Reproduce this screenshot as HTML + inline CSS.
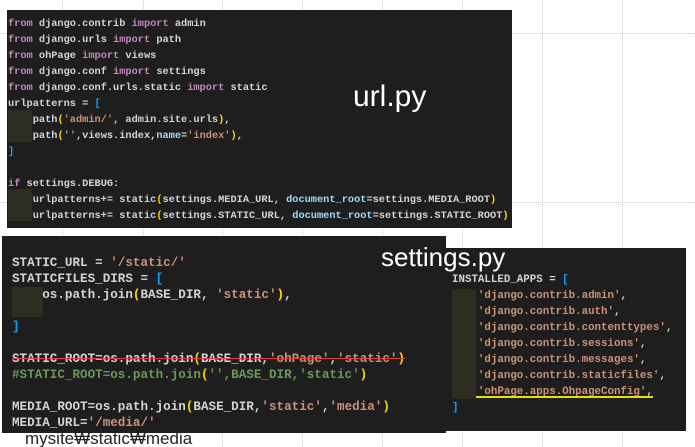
<!DOCTYPE html>
<html><head><meta charset="utf-8"><style>
html,body{margin:0;padding:0;width:695px;height:447px;overflow:hidden;background:#fff;position:relative}
.p{position:absolute;background:#1e1e1e}
.c{position:absolute;font-family:"Liberation Mono",monospace;font-size:11.5px;color:#d4d4d4;white-space:pre;line-height:16px;font-weight:bold}
.k{color:#c586c0}.s{color:#ce9178}.b{color:#9cdcfe}.y{color:#ffd700}.bl{color:#179fff}.g{color:#6a9955}
.ind{position:absolute;background:#2d2d22}
.big{position:absolute;font-family:"Liberation Sans",sans-serif;color:#fff;font-size:26px}
.grid{position:absolute;border-left:1px dotted #ccc;top:0;height:447px}
.hg{position:absolute;border-top:1px dotted #ccc;left:0;width:695px}
</style></head><body>
<div class="grid" style="left:62px"></div><div class="grid" style="left:143px"></div><div class="grid" style="left:222px"></div><div class="grid" style="left:302px"></div><div class="grid" style="left:382px"></div><div class="grid" style="left:462px"></div><div class="grid" style="left:542px"></div><div class="grid" style="left:622px"></div>
<div class="hg" style="top:33px"></div><div class="hg" style="top:202px"></div>

<div class="p" style="left:7px;top:10px;width:505px;height:218px"></div>
<div class="ind" style="left:8px;top:110px;width:24px;height:32px"></div>
<div class="ind" style="left:8px;top:189px;width:24px;height:32px"></div>
<div class="c" style="left:8px;top:16px;font-size:10.3px"><span class="k">from</span> django.contrib <span class="k">import</span> admin
<span class="k">from</span> django.urls <span class="k">import</span> path
<span class="k">from</span> ohPage <span class="k">import</span> views
<span class="k">from</span> django.conf <span class="k">import</span> settings
<span class="k">from</span> django.conf.urls.static <span class="k">import</span> static
urlpatterns = <span class="bl">[</span>
    path<span class="y">(</span><span class="s">'admin/'</span>, admin.site.urls<span class="y">)</span>,
    path<span class="y">(</span><span class="s">''</span>,views.index,<span class="b">name</span>=<span class="s">'index'</span><span class="y">)</span>,
<span class="bl">]</span>

<span class="k">if</span> settings.DEBUG:
    urlpatterns+= static<span class="y">(</span>settings.MEDIA_URL, <span class="b">document_root</span>=settings.MEDIA_ROOT<span class="y">)</span>
    urlpatterns+= static<span class="y">(</span>settings.STATIC_URL, <span class="b">document_root</span>=settings.STATIC_ROOT<span class="y">)</span></div>
<div class="big" style="left:353px;top:80px;font-size:30px">url.py</div>

<div class="p" style="left:2px;top:236px;width:444px;height:197px"></div>
<div class="p" style="left:446px;top:248px;width:240px;height:183px"></div>
<div class="ind" style="left:12px;top:287px;width:31px;height:30px"></div>
<div class="c" style="left:12px;top:255px;font-size:12.6px"><span>STATIC_URL = <span class="s">'/static/'</span></span>
STATICFILES_DIRS = <span class="bl">[</span>
    os.path.join<span class="y">(</span>BASE_DIR, <span class="s">'static'</span><span class="y">)</span>,

<span class="bl">]</span>

<span style="text-decoration:line-through;text-decoration-color:#e04040">STATIC_ROOT=os.path.join<span class="y">(</span>BASE_DIR,<span class="s">'ohPage'</span>,<span class="s">'static'</span><span class="y">)</span></span>
<span class="g">#STATIC_ROOT=os.path.join<span class="y">(</span>'',BASE_DIR,'static'<span class="y">)</span></span>

MEDIA_ROOT=os.path.join<span class="y">(</span>BASE_DIR,<span class="s">'static'</span>,<span class="s">'media'</span><span class="y">)</span>
MEDIA_URL=<span class="s">'/media/'</span></div>
<div class="big" style="left:381px;top:242px">settings.py</div>

<div class="ind" style="left:452px;top:289px;width:24px;height:110px"></div>
<div class="c" style="left:452px;top:272px;font-size:10.8px">INSTALLED_APPS = <span class="bl">[</span>
    <span class="s">'django.contrib.admin'</span>,
    <span class="s">'django.contrib.auth'</span>,
    <span class="s">'django.contrib.contenttypes'</span>,
    <span class="s">'django.contrib.sessions'</span>,
    <span class="s">'django.contrib.messages'</span>,
    <span class="s">'django.contrib.staticfiles'</span>,
    <span class="s">'ohPage.apps.OhpageConfig'</span>,
<span class="bl">]</span></div>
<div style="position:absolute;left:476px;top:396px;width:177px;height:2px;background:#e8e000"></div>

<div style="position:absolute;left:25px;top:429px;font-family:'Liberation Sans',sans-serif;font-size:17px;color:#222">mysite₩static₩media</div>
</body></html>
